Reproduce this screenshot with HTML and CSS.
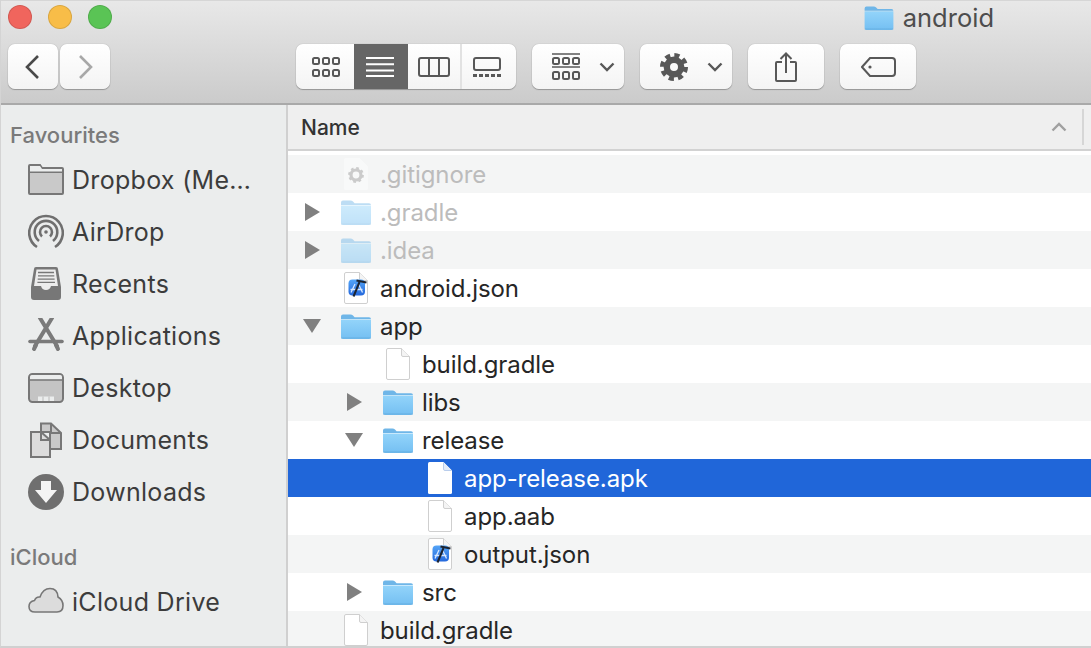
FILE: index.html
```html
<!DOCTYPE html>
<html lang="en">
<head>
    <meta charset="UTF-8">
    <title>android</title>
    <link rel="stylesheet" href="styles.css">
</head>
<body>
<svg class="defs" width="0" height="0">
    <defs>
        <linearGradient id="folderFill" x1="0" y1="0" x2="0" y2="1">
            <stop offset="0" stop-color="#93d4fa"/>
            <stop offset="1" stop-color="#74bff2"/>
        </linearGradient>
        <linearGradient id="xcFill" x1="0" y1="0" x2="0" y2="1">
            <stop offset="0" stop-color="#55a5f7"/>
            <stop offset="1" stop-color="#2468dc"/>
        </linearGradient>
        <symbol id="folder" viewBox="0 0 30 25">
            <path d="M0 2.5Q0 .5 2 .5H9.5Q11 .5 12 1.6L13.6 3.2H28Q30 3.2 30 5.2V5H0Z" fill="#6fb6e8"/>
            <path d="M0 5.5H30V23Q30 25 28 25H2Q0 25 0 23Z" fill="url(#folderFill)"/>
            <path d="M0 24H30" stroke="#5da4d6" stroke-width="1" opacity=".6"/>
        </symbol>
        <symbol id="doc" viewBox="0 0 24 32">
            <path d="M.5 2Q.5 .5 2 .5H15.5L23.5 8.5V30Q23.5 31.5 22 31.5H2Q.5 31.5 .5 30Z" fill="#fff" stroke="#cfcfcf"/>
            <path d="M15.5 .5V7Q15.5 8.5 17 8.5H23.5" fill="#f4f4f4" stroke="#cfcfcf"/>
        </symbol>
        <symbol id="docWhite" viewBox="0 0 24 32">
            <path d="M0 1.5Q0 0 1.5 0H15.5L24 8.5V30.5Q24 32 22.5 32H1.5Q0 32 0 30.5Z" fill="#fff"/>
            <path d="M15.5 .5V7Q15.5 8.5 17 8.5H23.5" fill="#e4ecf8" stroke="#b9cdec"/>
        </symbol>
        <symbol id="xcdoc" viewBox="0 0 24 32">
            <use href="#doc" width="24" height="32"/>
            <rect x="4.5" y="7.5" width="16.500" height="16" rx="4" fill="url(#xcFill)"/>
            <path d="M7 20.500L11 12M14.500 12L18.500 20.500M6.500 17.500H18.500" stroke="#d8e8ff" stroke-width="1.300" fill="none"/>
            <path d="M9.500 24.500L15.500 10" stroke="#1d2430" stroke-width="2"/>
            <path d="M12.500 8.500L22.500 10.500" stroke="#1d2430" stroke-width="2.200"/>
        </symbol>
        <symbol id="gearDoc" viewBox="0 0 24 32">
            <path d="M0 1.5Q0 0 1.5 0H15.5L24 8.5V30.5Q24 32 22.5 32H1.5Q0 32 0 30.5Z" fill="#fff"/>
            <circle cx="12" cy="17" r="5" fill="none" stroke="#9a9a9a" stroke-width="3.2"/>
            <circle cx="12" cy="17" r="6.8" fill="none" stroke="#9a9a9a" stroke-width="2.2" stroke-dasharray="2.7 2.64"/>
        </symbol>
        <symbol id="triRight" viewBox="0 0 22 18">
            <path d="M4 0L19 9L4 18Z" fill="#808080"/>
        </symbol>
        <symbol id="triDown" viewBox="0 0 22 18">
            <path d="M2 2H20L11 16Z" fill="#808080"/>
        </symbol>
        <symbol id="chevDown" viewBox="0 0 16 10">
            <path d="M1.5 1.5L8 8L14.5 1.5" fill="none" stroke="#585858" stroke-width="2.4"/>
        </symbol>
    </defs>
</svg>

<div class="window">
    <header class="toolbar">
        <div class="titlebar">
            <div class="lights">
                <span class="light red"></span>
                <span class="light yellow"></span>
                <span class="light green"></span>
            </div>
            <div class="title">
                <svg class="title-icon"><use href="#folder"/></svg>
                <span>android</span>
            </div>
        </div>
        <div class="tools">
            <div class="btn-pair">
                <div class="btn nav-btn">
                    <svg width="20" height="26" viewBox="0 0 20 26"><path d="M15 2L4 13L15 24" fill="none" stroke="#4a4a4a" stroke-width="2.6"/></svg>
                </div>
                <div class="btn nav-btn">
                    <svg width="20" height="26" viewBox="0 0 20 26"><path d="M5 2L16 13L5 24" fill="none" stroke="#a8a8a8" stroke-width="2.6"/></svg>
                </div>
            </div>
            <div class="btn segments">
                <div class="seg seg-icons">
                    <svg width="28" height="20" viewBox="0 0 28 20" fill="none" stroke="#585858" stroke-width="2">
                        <rect x="1" y="1" width="6" height="6" rx="1.5"/><rect x="11" y="1" width="6" height="6" rx="1.5"/><rect x="21" y="1" width="6" height="6" rx="1.5"/>
                        <rect x="1" y="13" width="6" height="6" rx="1.5"/><rect x="11" y="13" width="6" height="6" rx="1.5"/><rect x="21" y="13" width="6" height="6" rx="1.5"/>
                    </svg>
                </div>
                <div class="seg seg-list">
                    <svg width="28" height="20" viewBox="0 0 28 20" stroke="#fff" stroke-width="2">
                        <path d="M0 1H28M0 7.300H28M0 13.600H28M0 19H28"/>
                    </svg>
                </div>
                <div class="seg seg-columns">
                    <svg width="32" height="20" viewBox="0 0 32 20" fill="none" stroke="#585858" stroke-width="2">
                        <rect x="1" y="1" width="30" height="18" rx="2"/><path d="M11 1V19M21 1V19"/>
                    </svg>
                </div>
                <div class="seg seg-gallery">
                    <svg width="28" height="20" viewBox="0 0 28 20" fill="none" stroke="#585858" stroke-width="2">
                        <rect x="1" y="1" width="26" height="12" rx="2"/>
                        <path d="M0 18.500H28" stroke-width="3" stroke-dasharray="4 2"/>
                    </svg>
                </div>
            </div>
            <div class="btn arrange">
                <svg width="28" height="27" viewBox="0 0 28 27" fill="none" stroke="#585858" stroke-width="2">
                    <path d="M0 1H28M0 14H28" stroke-width="1.600"/>
                    <rect x="1" y="5" width="6" height="6" rx="1.500"/><rect x="11" y="5" width="6" height="6" rx="1.500"/><rect x="21" y="5" width="6" height="6" rx="1.500"/>
                    <rect x="1" y="19" width="6" height="7" rx="1.500"/><rect x="11" y="19" width="6" height="7" rx="1.500"/><rect x="21" y="19" width="6" height="7" rx="1.500"/>
                </svg>
                <svg class="chev"><use href="#chevDown"/></svg>
            </div>
            <div class="btn action">
                <svg width="28" height="28" viewBox="0 0 28 28" fill="none" stroke="#585858">
                    <circle cx="14" cy="14" r="7.200" stroke-width="6.400"/>
                    <circle cx="14" cy="14" r="11.500" stroke-width="5" stroke-dasharray="5 4.030"/>
                </svg>
                <svg class="chev"><use href="#chevDown"/></svg>
            </div>
            <div class="btn share">
                <svg width="22" height="30" viewBox="0 0 22 30" fill="none" stroke="#585858" stroke-width="2">
                    <path d="M7 10H2Q1 10 1 11V28Q1 29 2 29H20Q21 29 21 28V11Q21 10 20 10H15"/>
                    <path d="M11 21V1.500M5.500 7L11 1.500L16.500 7"/>
                </svg>
            </div>
            <div class="btn tag">
                <svg width="35" height="20" viewBox="0 0 35 20" fill="none" stroke="#585858" stroke-width="2">
                    <path d="M9 1H31Q34 1 34 4V16Q34 19 31 19H9L1 10Z"/>
                    <circle cx="9" cy="10" r="1.600" fill="#585858" stroke="none"/>
                </svg>
            </div>
        </div>
    </header>

    <div class="content">
        <aside class="sidebar">
            <h2 class="side-head">Favourites</h2>
            <ul class="side-list">
                <li class="side-item">
                    <svg class="side-icon" viewBox="0 0 36 36" stroke="#777" stroke-width="2">
                        <path d="M1 31V4Q1 3 2 3H12L14 6H34Q35 6 35 7V31Q35 32 34 32H2Q1 32 1 31Z" fill="#c9c9c9"/>
                        <path d="M1 10H35" fill="none"/>
                        <path d="M2 4H12L14 7H34V9.500H2Z" fill="#ebeded" stroke="none"/>
                    </svg>
                    <span>Dropbox (Me…</span>
                </li>
                <li class="side-item">
                    <svg class="side-icon" viewBox="0 0 36 36" fill="none" stroke="#6f6f6f" stroke-width="2.600">
                        <path d="M9 33A16.800 16.800 0 1 1 27 33"/>
                        <path d="M11 27A11.300 11.300 0 1 1 25 27"/>
                        <path d="M14 22.500A6 6 0 1 1 22 22.500"/>
                        <circle cx="18" cy="18" r="1.800" fill="#6f6f6f" stroke="none"/>
                    </svg>
                    <span>AirDrop</span>
                </li>
                <li class="side-item">
                    <svg class="side-icon" viewBox="0 0 36 36">
                        <path d="M6 3Q6 1 8 1H28Q30 1 30 3L33 21V31Q33 34 30 34H6Q3 34 3 31V21Z" fill="#777"/>
                        <path d="M8.500 3.500H27.500L30 20H23Q22 24 18 24Q14 24 13 20H6Z" fill="#ececec"/>
                        <path d="M10 6.500H26M10 9.800H26.300M9.700 13.100H26.600M9.400 16.400H27" stroke="#777" stroke-width="1.300"/>
                    </svg>
                    <span>Recents</span>
                </li>
                <li class="side-item">
                    <svg class="side-icon" viewBox="0 0 36 36" fill="none" stroke="#7a7a7a" stroke-linecap="round">
                        <path d="M12 0L29 28M24 0L7 28" stroke-width="4"/>
                        <path d="M2 23.500H34" stroke-width="3.600"/>
                        <path d="M6 31L8 27M30 31L28 27" stroke-width="4"/>
                    </svg>
                    <span>Applications</span>
                </li>
                <li class="side-item">
                    <svg class="side-icon" viewBox="0 0 36 36">
                        <rect x="1" y="4" width="34" height="28" rx="3.500" fill="#c4c4c4" stroke="#777" stroke-width="2"/>
                        <path d="M2 9.500V7Q2 5 4 5H32Q34 5 34 7V9.500Z" fill="#ebeded"/>
                        <path d="M1 10H35" stroke="#777" stroke-width="1.500"/>
                        <path d="M10 26.500H26V31H10Z" fill="#ebeded"/>
                        <path d="M15 26.500V31M21 26.500V31" stroke="#c4c4c4" stroke-width="1.200"/>
                    </svg>
                    <span>Desktop</span>
                </li>
                <li class="side-item">
                    <svg class="side-icon" viewBox="0 0 36 36" stroke="#777" stroke-width="2">
                        <path d="M13 10V1.500H23L33 11V27H22V10Z" fill="#c9c9c9"/>
                        <path d="M23 1.500V11H33" fill="none"/>
                        <path d="M3 10H13L22 18V35H3Z" fill="#dcdcdc"/>
                        <path d="M13 10V18H22" fill="none"/>
                    </svg>
                    <span>Documents</span>
                </li>
                <li class="side-item">
                    <svg class="side-icon" viewBox="0 0 36 36">
                        <circle cx="18" cy="18" r="18" fill="#6f6f6f"/>
                        <path d="M13 7H23V16H29L18 29L7 16H13Z" fill="#f4f4f4"/>
                    </svg>
                    <span>Downloads</span>
                </li>
            </ul>
            <h2 class="side-head cloud-head">iCloud</h2>
            <ul class="side-list">
                <li class="side-item">
                    <svg class="side-icon" viewBox="0 0 36 36">
                        <path d="M7 28Q1 28 1 22.500Q1 17.500 6.500 16.500Q8 12.500 12 13Q15 4.500 22 4.500Q29.500 4.500 30 13Q35 16 35 21.500Q35 28 29 28Z" fill="#dcdcdc" stroke="#777" stroke-width="1.600"/>
                    </svg>
                    <span>iCloud Drive</span>
                </li>
            </ul>
        </aside>

        <main class="files">
            <div class="col-head">
                <span class="col-name">Name</span>
                <svg class="sort" width="16" height="10" viewBox="0 0 16 10"><path d="M1.500 8.500L8 2L14.500 8.500" fill="none" stroke="#a0a0a0" stroke-width="2.400"/></svg>
                <span class="col-rule"></span>
            </div>
            <ul class="rows">
                <li class="row alt dim">
                    <span class="tri"></span>
                    <span class="ficon"><svg class="doc"><use href="#gearDoc"/></svg></span>
                    <span class="fname">.gitignore</span>
                </li>
                <li class="row dim">
                    <span class="tri"><svg><use href="#triRight"/></svg></span>
                    <span class="ficon"><svg class="fold"><use href="#folder"/></svg></span>
                    <span class="fname">.gradle</span>
                </li>
                <li class="row alt dim">
                    <span class="tri"><svg><use href="#triRight"/></svg></span>
                    <span class="ficon"><svg class="fold"><use href="#folder"/></svg></span>
                    <span class="fname">.idea</span>
                </li>
                <li class="row">
                    <span class="tri"></span>
                    <span class="ficon"><svg class="doc"><use href="#xcdoc"/></svg></span>
                    <span class="fname">android.json</span>
                </li>
                <li class="row alt">
                    <span class="tri"><svg><use href="#triDown"/></svg></span>
                    <span class="ficon"><svg class="fold"><use href="#folder"/></svg></span>
                    <span class="fname">app</span>
                </li>
                <li class="row lvl1">
                    <span class="tri"></span>
                    <span class="ficon"><svg class="doc"><use href="#doc"/></svg></span>
                    <span class="fname">build.gradle</span>
                </li>
                <li class="row alt lvl1">
                    <span class="tri"><svg><use href="#triRight"/></svg></span>
                    <span class="ficon"><svg class="fold"><use href="#folder"/></svg></span>
                    <span class="fname">libs</span>
                </li>
                <li class="row lvl1">
                    <span class="tri"><svg><use href="#triDown"/></svg></span>
                    <span class="ficon"><svg class="fold"><use href="#folder"/></svg></span>
                    <span class="fname">release</span>
                </li>
                <li class="row lvl2 selected">
                    <span class="tri"></span>
                    <span class="ficon"><svg class="doc"><use href="#docWhite"/></svg></span>
                    <span class="fname">app-release.apk</span>
                </li>
                <li class="row lvl2">
                    <span class="tri"></span>
                    <span class="ficon"><svg class="doc"><use href="#doc"/></svg></span>
                    <span class="fname">app.aab</span>
                </li>
                <li class="row alt lvl2">
                    <span class="tri"></span>
                    <span class="ficon"><svg class="doc"><use href="#xcdoc"/></svg></span>
                    <span class="fname">output.json</span>
                </li>
                <li class="row lvl1">
                    <span class="tri"><svg><use href="#triRight"/></svg></span>
                    <span class="ficon"><svg class="fold"><use href="#folder"/></svg></span>
                    <span class="fname">src</span>
                </li>
                <li class="row alt">
                    <span class="tri"></span>
                    <span class="ficon"><svg class="doc"><use href="#doc"/></svg></span>
                    <span class="fname">build.gradle</span>
                </li>
            </ul>
        </main>
    </div>
</div>
</body>
</html>
```

FILE: styles.css
```css
* {
    margin: 0;
    padding: 0;
    box-sizing: border-box;
}

html, body {
    height: 100%;
    overflow: hidden;
}

body {
    font-family: Inter, "Liberation Sans", sans-serif;
    color: #262626;
    background-color: #fff;
}

ul {
    list-style: none;
}

.defs {
    display: block;
    height: 0;
}

.window {
    height: 648px;
    display: flex;
    flex-direction: column;
    border-left: 1px solid #d4d4d4;
    border-bottom: 2px solid #d0d0d0;
}

/* toolbar */
.toolbar {
    height: 105px;
    flex: none;
    background: linear-gradient(#e8e8e8, #cbcbcb);
    border-top: 1px solid #d6d6d6;
    border-bottom: 2px solid #a9a9a9;
    padding-left: 7px;
}

.titlebar {
    height: 43px;
    display: flex;
    align-items: flex-start;
    justify-content: space-between;
}

.lights {
    display: flex;
    gap: 16px;
    padding-top: 4px;
}

.light {
    width: 24px;
    height: 24px;
    border-radius: 50%;
    border: 1px solid rgba(0, 0, 0, 0.12);
}

.red { background-color: #f0655d; }
.yellow { background-color: #f8bd48; }
.green { background-color: #5ac455; }

.title {
    display: flex;
    align-items: center;
    gap: 9px;
    padding-top: 1px;
    padding-right: 97px;
    font-size: 25.5px;
    color: #4d4d4d;
}

.title-icon {
    width: 30px;
    height: 24px;
}

.tools {
    display: flex;
    align-items: flex-start;
}

.btn {
    height: 45px;
    display: flex;
    align-items: center;
    justify-content: center;
    background: linear-gradient(#fff, #f4f4f4);
    border-radius: 7px;
    box-shadow: 0 0 1px rgba(0, 0, 0, 0.35), 0 1px 1px rgba(0, 0, 0, 0.25);
}

.btn-pair {
    display: flex;
    gap: 2px;
}

.nav-btn {
    width: 50px;
}

.segments {
    width: 220px;
    margin-left: 186px;
    overflow: hidden;
    justify-content: flex-start;
}

.seg {
    height: 100%;
    display: flex;
    align-items: center;
    justify-content: center;
}

.seg-icons { width: 58px; padding-left: 2px; }
.seg-list { width: 54px; padding-right: 2px; background-color: #666; }
.seg-columns { width: 52px; }
.seg-gallery { width: 56px; padding-right: 4px; border-left: 2px solid #e2e2e2; }

.arrange,
.action {
    width: 92px;
    margin-left: 16px;
    justify-content: flex-start;
    padding-left: 20px;
    gap: 19px;
}

.share,
.tag {
    width: 76px;
    margin-left: 16px;
}

.chev {
    width: 16px;
    height: 10px;
}

/* sidebar */
.content {
    flex: 1;
    display: flex;
    min-height: 0;
}

.sidebar {
    width: 287px;
    flex: none;
    background-color: #ebeded;
    border-right: 2px solid #d0d0d0;
    padding-top: 17px;
}

.side-head {
    font-size: 22px;
    font-weight: 500;
    line-height: 26px;
    color: #7a7a7a;
    padding-left: 9px;
}

.cloud-head {
    margin-top: 26px;
}

.side-list {
    margin-top: 6px;
}

.side-item {
    height: 52px;
    display: flex;
    align-items: center;
    gap: 8px;
    padding-left: 27px;
    font-size: 25px;
    letter-spacing: 0.3px;
    color: #3c3c3c;
}

.side-icon {
    width: 36px;
    height: 36px;
    flex: none;
}

/* file list */
.files {
    flex: 1;
    min-width: 0;
    overflow: hidden;
}

.col-head {
    height: 46px;
    display: flex;
    align-items: center;
    background-color: #efefef;
    border-bottom: 2px solid #d2d2d2;
    padding-left: 13px;
    margin-bottom: 4px;
}

.col-name {
    flex: 1;
    font-size: 21px;
    font-weight: 500;
    color: #333;
}

.sort {
    margin-right: 15px;
}

.col-rule {
    width: 2px;
    height: 36px;
    margin-right: 7px;
    background-color: #d6d6d6;
}

.row {
    height: 38px;
    display: flex;
    align-items: center;
    padding-left: 13px;
    font-size: 24px;
    letter-spacing: -0.08px;
}

.alt {
    background-color: #f4f5f5;
}

.lvl1 {
    padding-left: 55px;
}

.lvl2 {
    padding-left: 97px;
}

.tri {
    width: 37px;
    height: 18px;
    flex: none;
}

.tri svg {
    display: block;
    width: 22px;
    height: 18px;
}

.ficon {
    width: 36px;
    flex: none;
    display: flex;
    justify-content: center;
}

.doc {
    width: 24px;
    height: 32px;
}

.fold {
    width: 30px;
    height: 25px;
}

.fname {
    margin-left: 6px;
}

.dim .ficon svg {
    opacity: 0.45;
}

.dim .fname {
    color: #bcbcbc;
}

.selected {
    background-color: #2066d9;
    color: #fff;
}
```
